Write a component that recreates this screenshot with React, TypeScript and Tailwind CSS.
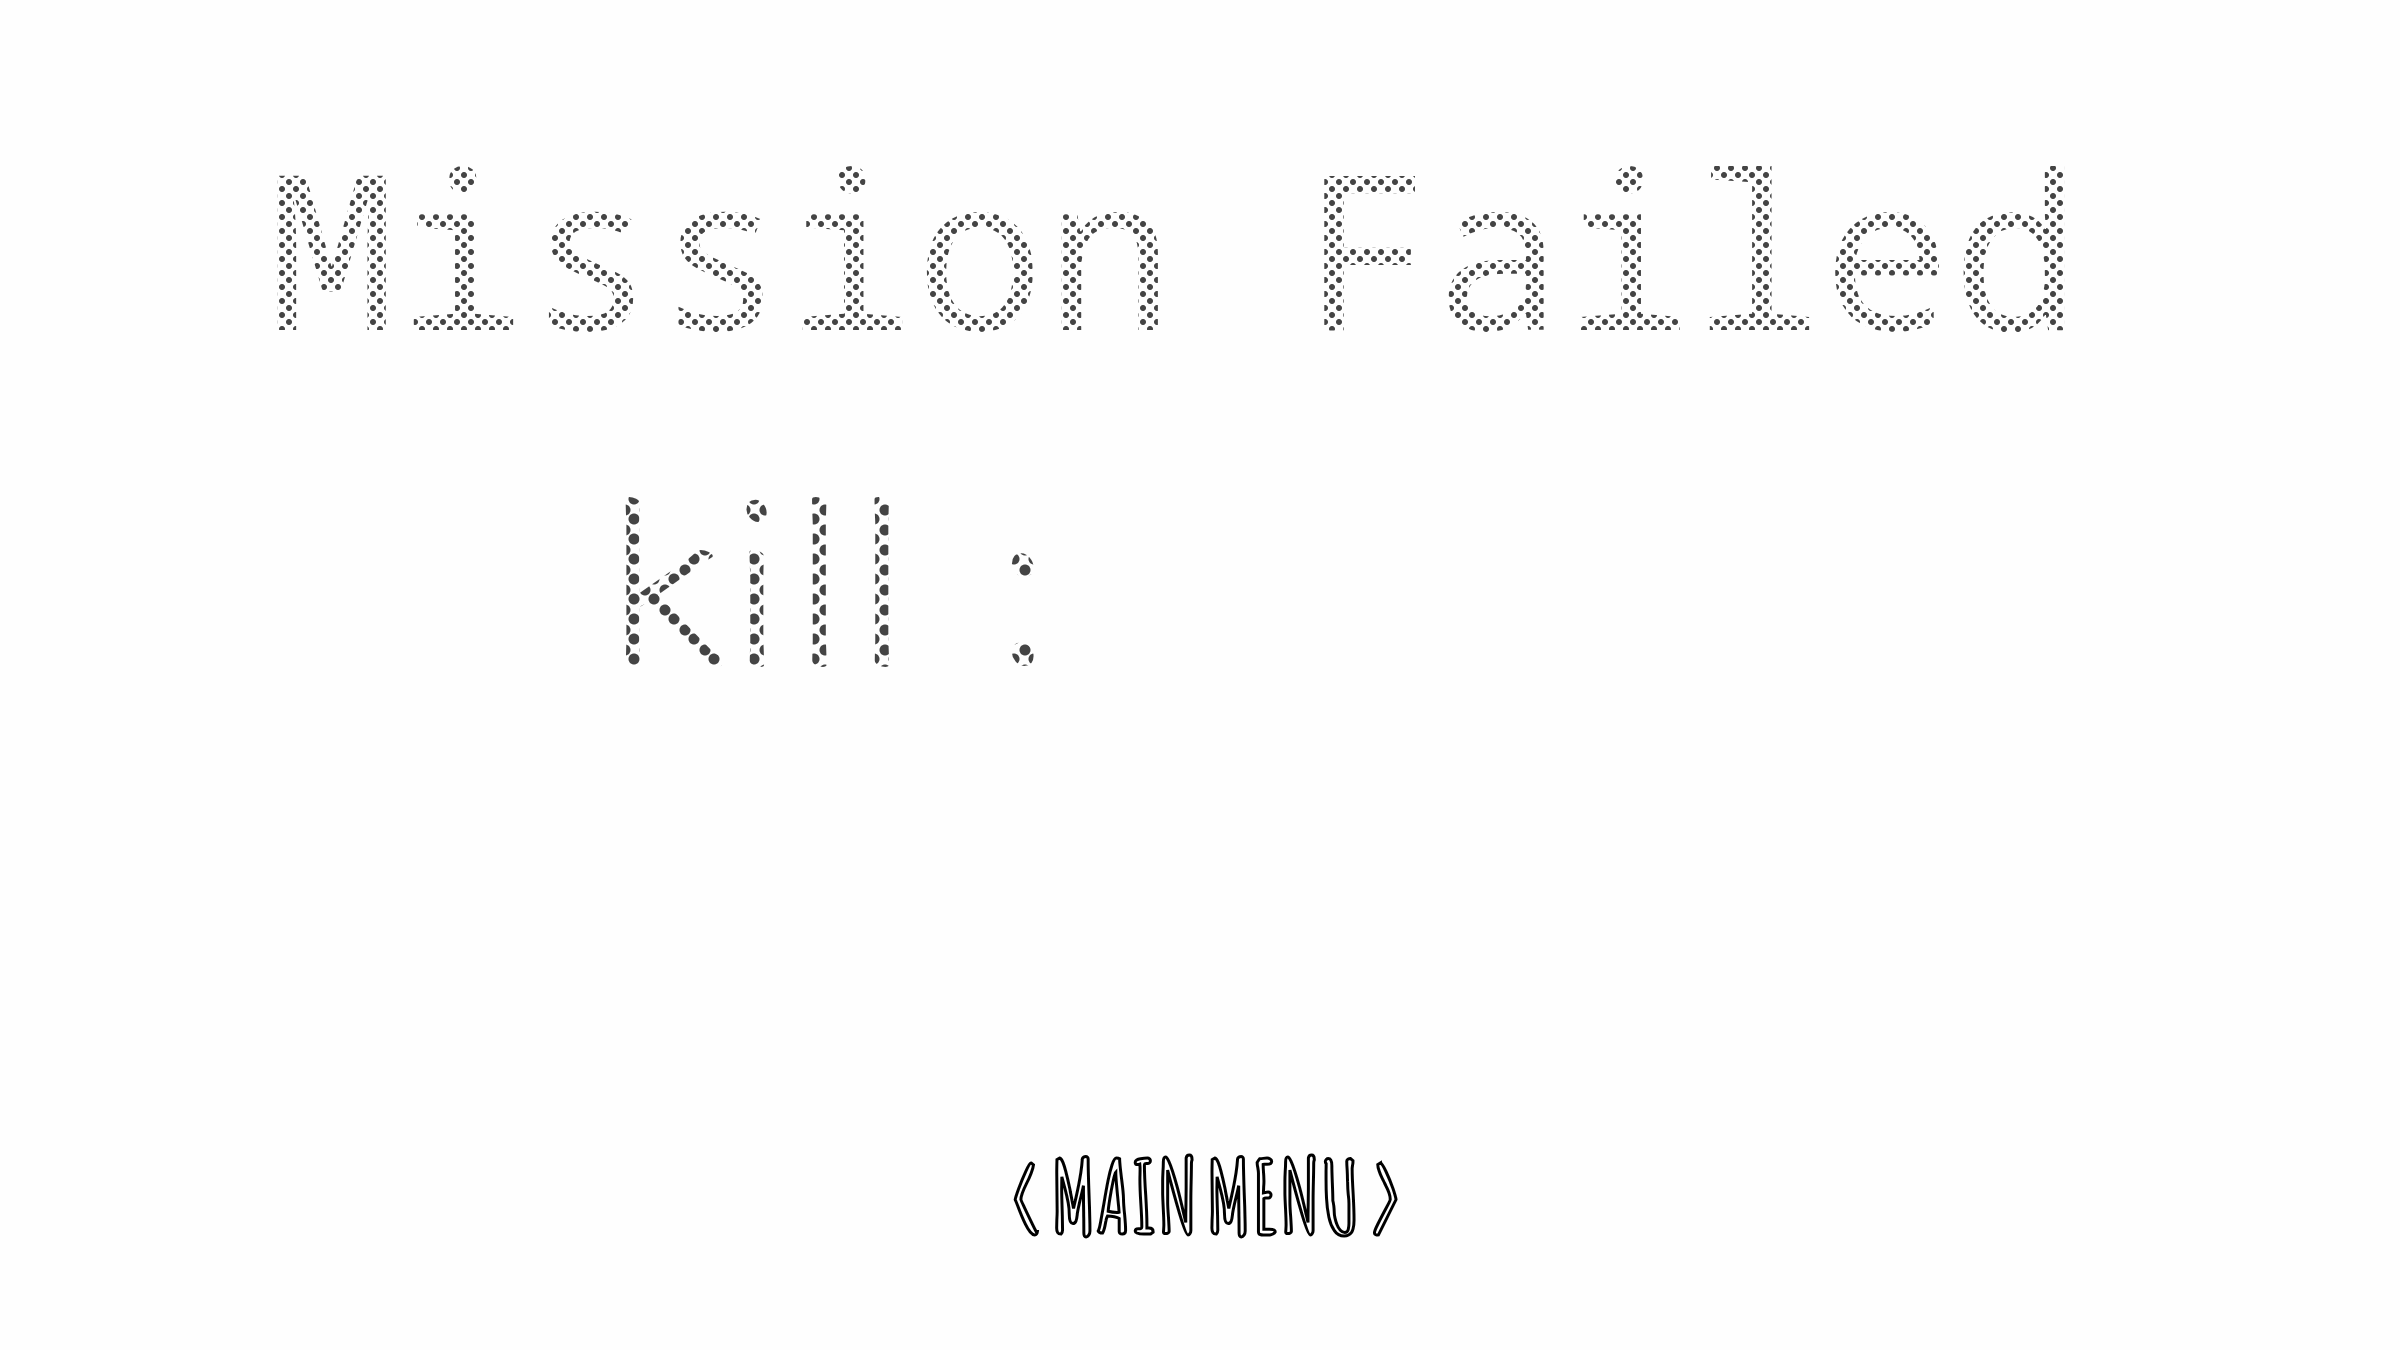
export default function App() {
  return (
    <main className="flex min-h-screen flex-col bg-[#fefefe] pt-[126px] pb-[104px]">
      <h1 className="bg-[radial-gradient(#444_2.5px,transparent_3.5px),radial-gradient(#444_2.5px,transparent_3.5px)] bg-[length:14px_14px] bg-[position:9px_0,2px_7px] bg-clip-text pl-[267px] font-['Noto_Sans_Mono',monospace] text-[216px] leading-[240px] font-normal whitespace-nowrap text-transparent">
        Mission Failed
      </h1>
      <p className="mt-[74px] bg-[radial-gradient(#444_5px,transparent_6px),radial-gradient(#444_5px,transparent_6px)] bg-[length:20px_20px] bg-[position:15px_0,4px_9px] bg-clip-text pl-[604px] font-['Klee_One',sans-serif] text-[238px] leading-[244px] whitespace-nowrap text-transparent">
        kill <span className="-ml-4">:</span>
      </p>
      <div className="mt-auto flex justify-center pl-3">
        <button
          type="button"
          className="flex cursor-pointer gap-1.5 font-['Amatic_SC',cursive] text-[100px] leading-none font-bold text-white [-webkit-text-stroke:3px_black]"
        >
          <span>&lt;</span>
          <span className="flex gap-2">
            <span>MAIN</span>
            <span>MENU</span>
          </span>
          <span>&gt;</span>
        </button>
      </div>
    </main>
  );
}
